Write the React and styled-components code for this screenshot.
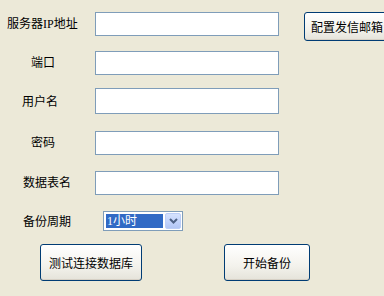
import styled, { createGlobalStyle } from "styled-components";

const GlobalStyle = createGlobalStyle`
  html, body {
    margin: 0;
    padding: 0;
    overflow: hidden;
    background: #ece9d8;
  }
  body {
    font-family: "Liberation Serif", "Noto Sans CJK SC", serif;
    font-size: 12px;
    color: #000;
  }
`;

const Form = styled.div`
  display: flex;
  flex-direction: column;
  width: 384px;
  height: 296px;
  padding-top: 12px;
  box-sizing: border-box;
`;

const Row = styled.div`
  display: flex;
  align-items: flex-start;
  margin-top: ${(props) => props.$gap || 0}px;
  height: ${(props) => props.$h}px;
  white-space: nowrap;
`;

const Label = styled.div`
  width: ${(props) => props.$w || 95}px;
  box-sizing: border-box;
  padding-left: ${(props) => props.$left}px;
  padding-top: ${(props) => props.$shift || 0}px;
  line-height: ${(props) => props.$h}px;
  flex-shrink: 0;
`;

const Input = styled.input`
  width: 184px;
  height: ${(props) => props.$h}px;
  box-sizing: border-box;
  border: 1px solid #7f9db9;
  background: #fff;
  margin: 0;
  padding: 0 3px;
  flex-shrink: 0;
  font: inherit;
  outline: none;
`;

const Button = styled.button`
  width: ${(props) => props.$w}px;
  height: ${(props) => props.$h}px;
  margin-left: ${(props) => props.$ml || 0}px;
  flex-shrink: 0;
  box-sizing: border-box;
  padding: 0;
  border: 1px solid #003c74;
  border-radius: 3px;
  background: linear-gradient(#ffffff, #f3f2ec 60%, #e5e3da);
  box-shadow: inset 0 -1px 0 #d6d0c5;
  font-family: "Liberation Serif", "Noto Sans CJK SC", serif;
  font-size: 12px;
  color: #000;
  text-align: ${(props) => props.$align || "center"};
  padding-left: ${(props) => props.$pl || 0}px;
`;

const Combo = styled.div`
  display: flex;
  gap: 2px;
  width: 80px;
  height: 20px;
  margin-left: 8px;
  box-sizing: border-box;
  border: 1px solid #7f9db9;
  background: #fff;
  padding: 2px 1px 1px 2px;
`;

const ComboValue = styled.div`
  flex: 1;
  background: #316ac5;
  color: #fff;
  line-height: 15px;
  padding-left: 1px;
  margin-bottom: 1px;
`;

const ComboArrow = styled.div`
  width: 16px;
  margin-top: -1px;
  box-sizing: border-box;
  display: flex;
  align-items: center;
  justify-content: center;
  border: 1px solid #bccef7;
  border-radius: 2px;
  background: linear-gradient(#d6e2fd, #c1d2fb 60%, #b2c6f5);
`;

const Buttons = styled.div`
  display: flex;
  gap: 82px;
  margin-top: 13px;
  padding-left: 40px;
`;

const fields = [
  { label: "端口", left: 31, gap: 15, h: 24 },
  { label: "用户名", left: 22, gap: 13, h: 26, shift: 2 },
  { label: "密码", left: 31, gap: 17, h: 24 },
  { label: "数据表名", left: 23, gap: 16, h: 24 },
];

const App = () => {
  return (
    <>
      <GlobalStyle />
      <Form>
        <Row $h={24}>
          <Label $left={7} $h={24}>
            服务器IP地址
          </Label>
          <Input $h={24} />
          <Button $w={86} $h={29} $ml={25} $align="left" $pl={6}>
            配置发信邮箱
          </Button>
        </Row>
        {fields.map((f) => (
          <Row key={f.label} $gap={f.gap} $h={f.h}>
            <Label $left={f.left} $h={f.h - (f.shift || 0)} $shift={f.shift}>
              {f.label}
            </Label>
            <Input $h={f.h} />
          </Row>
        ))}
        <Row $gap={16} $h={20}>
          <Label $left={23} $h={22}>
            备份周期
          </Label>
          <Combo>
            <ComboValue>1小时</ComboValue>
            <ComboArrow>
              <svg width="9" height="6" viewBox="0 0 9 6">
                <path
                  d="M1 1 L4.5 4.5 L8 1"
                  fill="none"
                  stroke="#4d6185"
                  strokeWidth="2"
                />
              </svg>
            </ComboArrow>
          </Combo>
        </Row>
        <Buttons>
          <Button $w={102} $h={37}>
            测试连接数据库
          </Button>
          <Button $w={86} $h={37}>
            开始备份
          </Button>
        </Buttons>
      </Form>
    </>
  );
};

export default App;
